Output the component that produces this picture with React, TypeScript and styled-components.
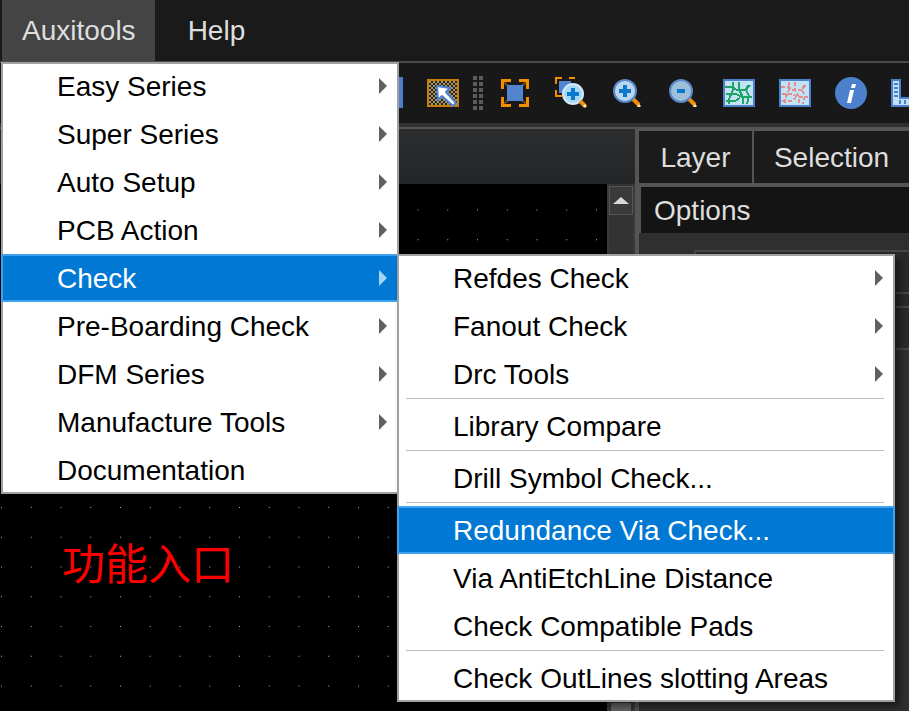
import React from "react";
import styled, { createGlobalStyle } from "styled-components";

const Global = createGlobalStyle`
  html, body { margin: 0; padding: 0; background: #000; }
  body { width: 909px; height: 711px; overflow: hidden; font-family: "Liberation Sans", Arial, sans-serif; }
`;

const Page = styled.div`
  position: relative;
  width: 909px;
  height: 711px;
  overflow: hidden;
  display: flex;
  flex-direction: column;
  background: #000;
  font-size: 28px;
`;

const MenuBar = styled.div`
  flex: none;
  height: 61px;
  padding-left: 2px;
  display: flex;
  background: #1a1a1a;
  border-bottom: 2px solid #4a4a4a;
  color: #dedede;
`;

const MenuTitle = styled.div<{ $open?: boolean }>`
  display: flex;
  align-items: center;
  padding: 0 19px 0 20px;
  margin-right: 13px;
  background: ${(p) => (p.$open ? "#444444" : "transparent")};
`;

const ToolBar = styled.div`
  flex: none;
  height: 60px;
  padding: 0 0 2px 399px;
  box-sizing: border-box;
  display: flex;
  align-items: center;
  background: #181818;
  border-top: 1px solid #1a1a1a;
  overflow: hidden;
`;

const ToolStub = styled.div`
  flex: none;
  width: 4px;
  height: 31px;
  margin-right: 12px;
  background: #4a80cc;
`;

const ToolCell = styled.div`
  flex: none;
  width: 56px;
  display: flex;
  justify-content: center;
  svg { display: block; flex: none; }
`;

const Grip = styled.div`
  flex: none;
  width: 10px;
  margin: 0 4px 0 2px;
  display: grid;
  grid-template-columns: 4px 4px;
  grid-auto-rows: 4px;
  gap: 2px;
  span { background: #5c5c5c; }
`;

const Band = styled.div`
  flex: none;
  height: 4px;
  background: #303030;
  border-bottom: 2px solid #555555;
`;

const Workspace = styled.div`
  flex: 1;
  min-height: 0;
  display: flex;
`;

const LeftColumn = styled.div`
  flex: none;
  width: 635px;
  display: flex;
  flex-direction: column;
`;

const DocStrip = styled.div`
  flex: none;
  height: 55px;
  background: linear-gradient(#2b2d2f, #232527);
`;

const CanvasRow = styled.div`
  flex: 1;
  min-height: 0;
  display: flex;
`;

const Canvas = styled.div`
  position: relative;
  flex: none;
  width: 607px;
  background-color: #000;
  background-image: radial-gradient(circle at 0.5px 0.5px, #b5b5b5 0.6px, transparent 0.7px);
  background-size: 29.75px 29.75px;
  background-position: 1px 25.5px;
`;

const Annotation = styled.div`
  position: absolute;
  left: 62px;
  top: 353px;
  font-family: "Noto Sans CJK SC", "Liberation Sans", sans-serif;
  font-size: 43px;
  line-height: 48px;
  color: #ff0000;
  white-space: nowrap;
`;

const ScrollBar = styled.div`
  flex: 1;
  display: flex;
  flex-direction: column;
  background: #333333;
  border-left: 2px solid #3a3a3a;
  border-right: 2px solid #3a3a3a;
  padding-top: 2px;
`;

const ScrollButton = styled.div`
  flex: none;
  height: 27px;
  display: flex;
  align-items: center;
  justify-content: center;
  background: #3a3a3a;
  border: 1px solid #555555;
  &::before {
    content: "";
    border-left: 8px solid transparent;
    border-right: 8px solid transparent;
    border-bottom: 7px solid #d8d8d8;
  }
`;

const ScrollTrack = styled.div`
  flex: 1;
  padding: 488px 2px 0;
  display: flex;
`;

const ScrollThumb = styled.div`
  flex: 1;
  background: #666666;
`;

const RightColumn = styled.div`
  flex: 1;
  display: flex;
  flex-direction: column;
  background: #555555;
  border-left: 4px solid #555555;
  box-sizing: border-box;
  padding-top: 2px;
  color: #dedede;
`;

const PanelTabs = styled.div`
  flex: none;
  height: 52px;
  display: flex;
  gap: 2px;
  margin-bottom: 4px;
`;

const PanelTab = styled.div<{ $grow?: boolean }>`
  ${(p) => (p.$grow ? "flex: 1;" : "width: 113px;")}
  display: flex;
  align-items: center;
  justify-content: center;
  padding-top: 2px;
  box-sizing: border-box;
  background: #1b1b1b;
`;

const OptionsHeader = styled.div`
  flex: none;
  height: 46px;
  margin-left: 2px;
  display: flex;
  align-items: center;
  padding: 2px 0 0 13px;
  box-sizing: border-box;
  background: #141414;
`;

const PanelBody = styled.div`
  flex: 1;
  padding: 17px 0 0 55px;
  background: #2f2f2f;
`;

const GroupBox = styled.div`
  border-top: 2px solid #464646;
  border-left: 2px solid #464646;
  display: flex;
  flex-direction: column;
`;

const GroupRow = styled.div<{ $h: number }>`
  height: ${(p) => p.$h}px;
  background: #2a2a2a;
  border-bottom: 2px solid #464646;
`;

const Menu = styled.div<{ $left: number; $top: number; $width: number }>`
  position: absolute;
  left: ${(p) => p.$left}px;
  top: ${(p) => p.$top}px;
  width: ${(p) => p.$width}px;
  box-sizing: border-box;
  background: #fff;
  border: 2px solid #a0a0a0;
  color: #000;
`;

const SubMenu = styled(Menu)`
  box-shadow: 5px 5px 7px rgba(0, 0, 0, 0.45);
`;

const MenuBody = styled.div`
  margin: -2px;
  display: flex;
  flex-direction: column;
`;

const MenuItem = styled.div<{ $active?: boolean; $inset: number; $pad: number }>`
  position: relative;
  height: 48px;
  box-sizing: border-box;
  display: flex;
  align-items: center;
  justify-content: space-between;
  padding: 2px ${(p) => p.$inset}px 0 ${(p) => p.$pad}px;
  white-space: nowrap;
  ${(p) =>
    p.$active
      ? "background: #0078d4; color: #fff; border: 2px solid #3fa2f0; padding-bottom: 0; padding-left: " + (p.$pad - 2) + "px; padding-right: " + (p.$inset - 2) + "px;"
      : ""}
`;

const Arrow = styled.span<{ $active?: boolean }>`
  flex: none;
  width: 0;
  height: 0;
  margin-top: -2px;
  border-top: 8px solid transparent;
  border-bottom: 8px solid transparent;
  border-left: 8px solid ${(p) => (p.$active ? "#a6d4f7" : "#606060")};
`;

const Separator = styled.div`
  flex: none;
  height: 4px;
  margin: 0 11px 0 9px;
  border-top: 1px solid #bdbdbd;
  box-sizing: border-box;
`;

const Select = () => (
  <svg width="32" height="28" viewBox="0 0 32 28">
    <defs>
      <pattern id="chk" width="4" height="4" patternUnits="userSpaceOnUse">
        <rect width="4" height="4" fill="#2a261c" />
        <rect width="2" height="2" fill="#a49468" />
        <rect x="2" y="2" width="2" height="2" fill="#a49468" />
      </pattern>
    </defs>
    <rect x="1" y="1" width="30" height="26" fill="url(#chk)" stroke="#c67f0c" strokeWidth="2" />
    <path d="M10 7L23 9L19 13L29 24L26 27L15 17L11 21Z" fill="#fff" stroke="#4d80d4" strokeWidth="2" strokeLinejoin="round" />
  </svg>
);

const Fit = () => (
  <svg width="28" height="28" viewBox="0 0 28 28">
    <path d="M3 3L7 7M25 3L21 7M3 25L7 21M25 25L21 21" stroke="#6b4a20" strokeWidth="2" />
    <path d="M10 1.5H1.5V10M18 1.5H26.5V10M1.5 18V26.5H10M26.5 18V26.5H18" fill="none" stroke="#f28c00" strokeWidth="3" />
    <rect x="6" y="6" width="16" height="16" fill="#5284d0" />
  </svg>
);

const Lens = ({ cx, cy, fill, children }: { cx: number; cy: number; fill: string; children?: React.ReactNode }) => (
  <g>
    <path d={`M${cx + 8} ${cy + 8}L${cx + 14} ${cy + 14}`} stroke="#ef8f10" strokeWidth="4" />
    <path d={`M${cx + 13} ${cy + 14}L${cx + 15} ${cy + 16}`} stroke="#ffe9a8" strokeWidth="3" />
    <circle cx={cx} cy={cy} r="11" fill={fill} stroke="#5a88c8" strokeWidth="2" />
    {children}
  </g>
);

const ZoomArea = () => (
  <svg width="32" height="32" viewBox="0 0 32 32">
    <path d="M1 7V1H7M14 1H20M1 13V19H7" fill="none" stroke="#f28c00" strokeWidth="2" />
    <rect x="4" y="4" width="12" height="12" fill="#5284d0" />
    <circle cx="18" cy="17" r="10" fill="#a9d8f5" stroke="#cfe8fa" strokeWidth="2" />
    <path d="M18 11V23M12 17H24" stroke="#0a78cc" strokeWidth="4" />
    <path d="M25 24L30 29" stroke="#ef8f10" strokeWidth="4" />
    <path d="M29 28L31 30" stroke="#ffe9a8" strokeWidth="3" />
  </svg>
);

const ZoomIn = () => (
  <svg width="28" height="28" viewBox="0 0 28 28">
    <Lens cx={12} cy={12} fill="#b8d6ee">
      <path d="M12 6V18M6 12H18" stroke="#0a78cc" strokeWidth="4" />
    </Lens>
  </svg>
);

const ZoomOut = () => (
  <svg width="28" height="28" viewBox="0 0 28 28">
    <Lens cx={12} cy={12} fill="#9dbfd9">
      <path d="M8 12H16" stroke="#0a78cc" strokeWidth="4" />
    </Lens>
  </svg>
);

const traces =
  "M2 8H9L14 11H23L27 6M3 15H13L19 18H29M10 3V11L6 20V25M16 3V11L20 18V25M25 6L23 11L26 17L24 25M3 22H12L17 19";

const Board = ({ colour, dash }: { colour: string; dash?: string }) => (
  <svg width="32" height="28" viewBox="0 0 32 28">
    <rect x="1" y="1" width="30" height="26" fill="#c2e2f6" stroke="#4d80cc" strokeWidth="2" />
    <path d={traces} fill="none" stroke={colour} strokeWidth="2" strokeDasharray={dash} shapeRendering="crispEdges" />
  </svg>
);

const Info = () => (
  <svg width="32" height="32" viewBox="0 0 32 32">
    <circle cx="16" cy="16" r="16" fill="#4d80cc" />
    <path d="M17 7h4l-1 4h-4zM15 13h4l-3 13h-4z" fill="#fff" />
  </svg>
);

const Ruler = () => (
  <svg width="32" height="28" viewBox="0 0 32 28">
    <path d="M1 1H9V19H31V27H1Z" fill="#bfe0f7" stroke="#4d80cc" strokeWidth="2" />
    <path d="M3 5H7M3 9H7M3 13H7M3 17H7M9 25V21M14 25V21M19 25V21M24 25V21" stroke="#4d80cc" strokeWidth="2" />
  </svg>
);

const mainItems: [string, boolean][] = [
  ["Easy Series", true],
  ["Super Series", true],
  ["Auto Setup", true],
  ["PCB Action", true],
  ["Check", true],
  ["Pre-Boarding Check", true],
  ["DFM Series", true],
  ["Manufacture Tools", true],
  ["Documentation", false],
];

type SubEntry = { label?: string; arrow?: boolean; active?: boolean };
const subItems: SubEntry[] = [
  { label: "Refdes Check", arrow: true },
  { label: "Fanout Check", arrow: true },
  { label: "Drc Tools", arrow: true },
  {},
  { label: "Library Compare" },
  {},
  { label: "Drill Symbol Check..." },
  {},
  { label: "Redundance Via Check...", active: true },
  { label: "Via AntiEtchLine Distance" },
  { label: "Check Compatible Pads" },
  {},
  { label: "Check OutLines slotting Areas" },
];

export default function App() {
  return (
    <Page>
      <Global />
      <MenuBar>
        <MenuTitle $open>Auxitools</MenuTitle>
        <MenuTitle>Help</MenuTitle>
      </MenuBar>
      <ToolBar>
        <ToolStub />
        <ToolCell><Select /></ToolCell>
        <Grip>
          {Array.from({ length: 12 }, (_, i) => (
            <span key={i} />
          ))}
        </Grip>
        <ToolCell><Fit /></ToolCell>
        <ToolCell><ZoomArea /></ToolCell>
        <ToolCell><ZoomIn /></ToolCell>
        <ToolCell><ZoomOut /></ToolCell>
        <ToolCell><Board colour="#1fa463" /></ToolCell>
        <ToolCell><Board colour="#e38d8d" dash="4 2" /></ToolCell>
        <ToolCell><Info /></ToolCell>
        <ToolCell><Ruler /></ToolCell>
      </ToolBar>
      <Band />
      <Workspace>
        <LeftColumn>
          <DocStrip />
          <CanvasRow>
            <Canvas>
              <Annotation>功能入口</Annotation>
            </Canvas>
            <ScrollBar>
              <ScrollButton />
              <ScrollTrack>
                <ScrollThumb />
              </ScrollTrack>
            </ScrollBar>
          </CanvasRow>
        </LeftColumn>
        <RightColumn>
          <PanelTabs>
            <PanelTab>Layer</PanelTab>
            <PanelTab $grow>Selection</PanelTab>
          </PanelTabs>
          <OptionsHeader>Options</OptionsHeader>
          <PanelBody>
            <GroupBox>
              <GroupRow $h={40} />
              <GroupRow $h={12} />
              <GroupRow $h={40} />
            </GroupBox>
          </PanelBody>
        </RightColumn>
      </Workspace>
      <Menu $left={1} $top={62} $width={398}>
        <MenuBody>
          {mainItems.map(([label, arrow]) => (
            <MenuItem key={label} $active={label === "Check"} $pad={56} $inset={12}>
              {label}
              {arrow && <Arrow $active={label === "Check"} />}
            </MenuItem>
          ))}
        </MenuBody>
      </Menu>
      <SubMenu $left={397} $top={254} $width={498}>
        <MenuBody>
          {subItems.map((item, i) =>
            item.label ? (
              <MenuItem key={i} $active={item.active} $pad={56} $inset={12}>
                {item.label}
                {item.arrow && <Arrow />}
              </MenuItem>
            ) : (
              <Separator key={i} />
            )
          )}
        </MenuBody>
      </SubMenu>
    </Page>
  );
}
